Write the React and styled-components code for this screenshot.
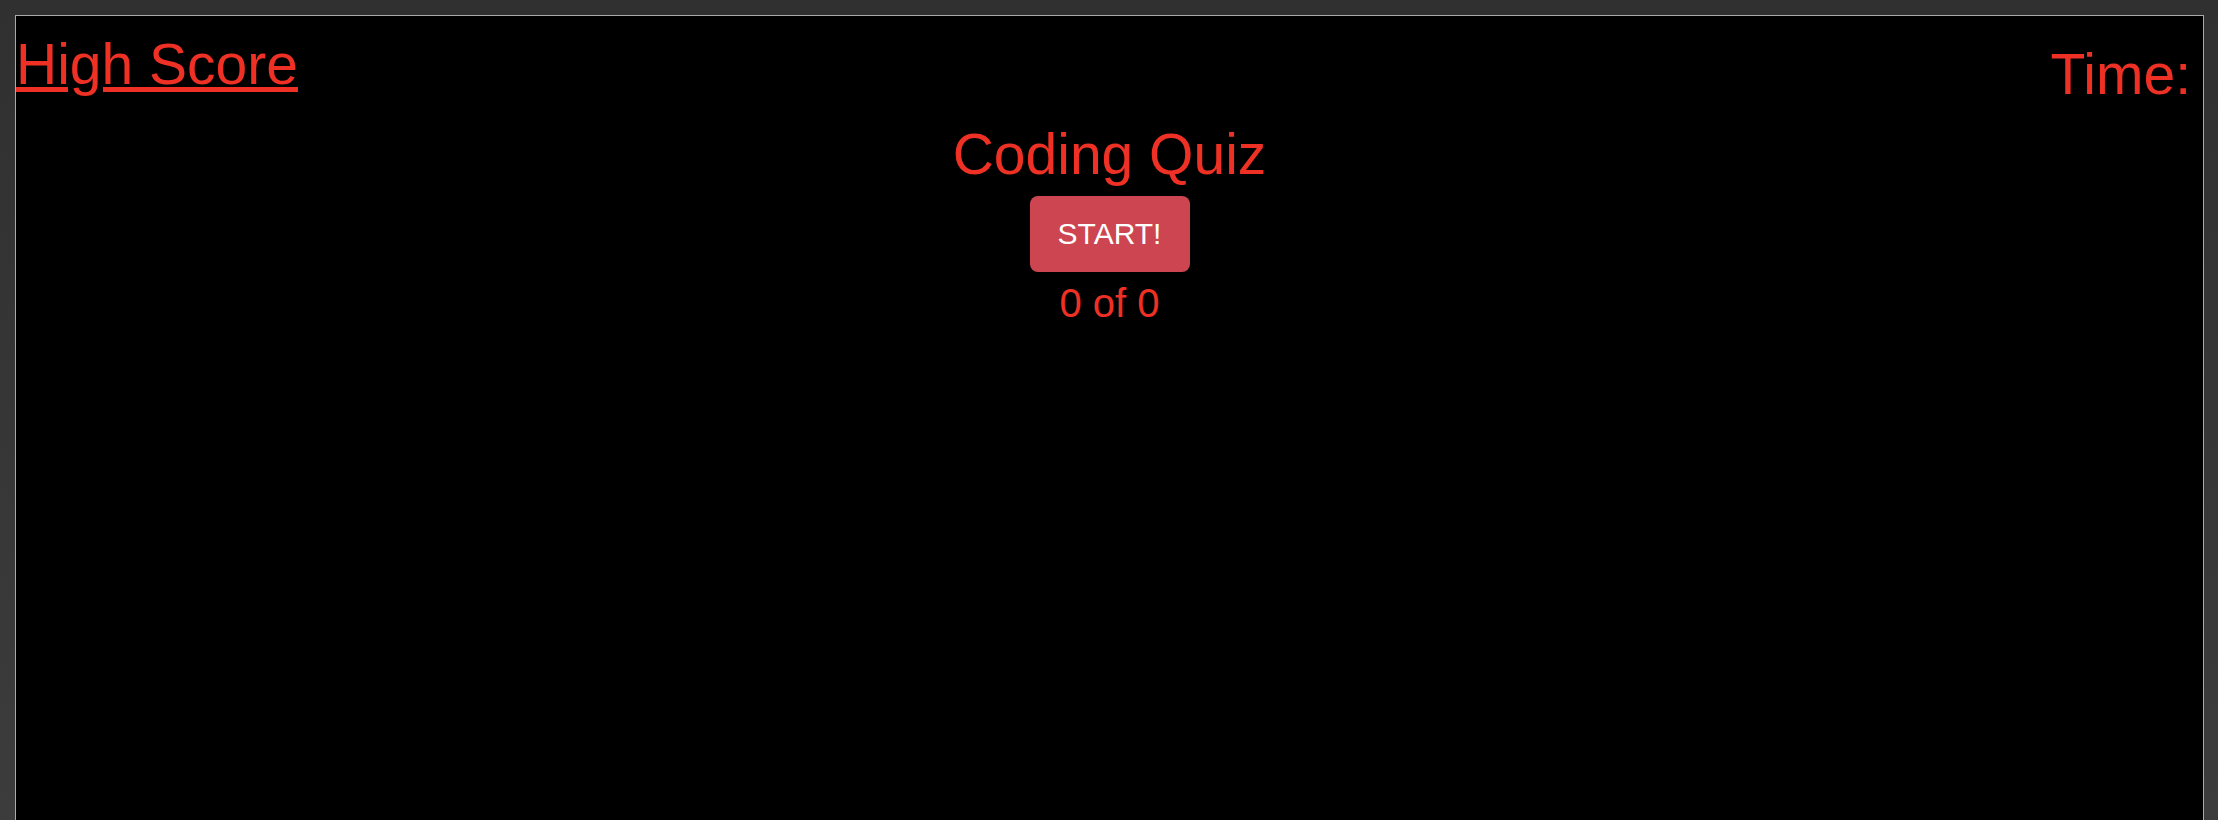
import React from "react";
import styled, { createGlobalStyle } from "styled-components";

const GlobalStyle = createGlobalStyle`
	html, body {
		margin: 0;
		padding: 0;
		background: #383838;
		font-family: "Liberation Sans", Arial, sans-serif;
	}
`;

const Page = styled.div`
	padding: 15px 14px 0 15px;
	height: 805px;
	overflow: hidden;
	background: linear-gradient(180deg, #303030 0%, #3c3c3c 100%);
`;

const Panel = styled.div`
	background: #000;
	border: 1px solid #a9a9a9;
	min-height: 900px;
	padding: 16px 12px 0 0;
	color: #ee3124;
`;

const Header = styled.div`
	display: flex;
	justify-content: space-between;
	align-items: flex-start;
`;

const HighScore = styled.a`
	font-size: 57px;
	line-height: 1.15;
	color: #ee3124;
	text-decoration: underline;
	cursor: pointer;
`;

const Time = styled.div`
	font-size: 57px;
	line-height: 1.15;
	margin-top: 10px;
`;

const Main = styled.div`
	display: flex;
	flex-direction: column;
	align-items: center;
	padding-left: 12px;
`;

const Title = styled.h1`
	font-size: 57px;
	font-weight: normal;
	line-height: 1.15;
	margin: 14px 0 0;
`;

const StartButton = styled.button`
	margin-top: 9px;
	width: 160px;
	height: 76px;
	border: none;
	border-radius: 8px;
	background: #cc4550;
	color: #fff;
	font-family: "Liberation Sans", Arial, sans-serif;
	font-size: 30px;
	cursor: pointer;
`;

const Progress = styled.div`
	font-size: 40px;
	line-height: 1.15;
	margin-top: 8px;
`;

const App = () => (
	<>
		<GlobalStyle />
		<Page>
			<Panel>
				<Header>
					<HighScore>High Score</HighScore>
					<Time>Time:</Time>
				</Header>
				<Main>
					<Title>Coding Quiz</Title>
					<StartButton>START!</StartButton>
					<Progress>0 of 0</Progress>
				</Main>
			</Panel>
		</Page>
	</>
);

export default App;
